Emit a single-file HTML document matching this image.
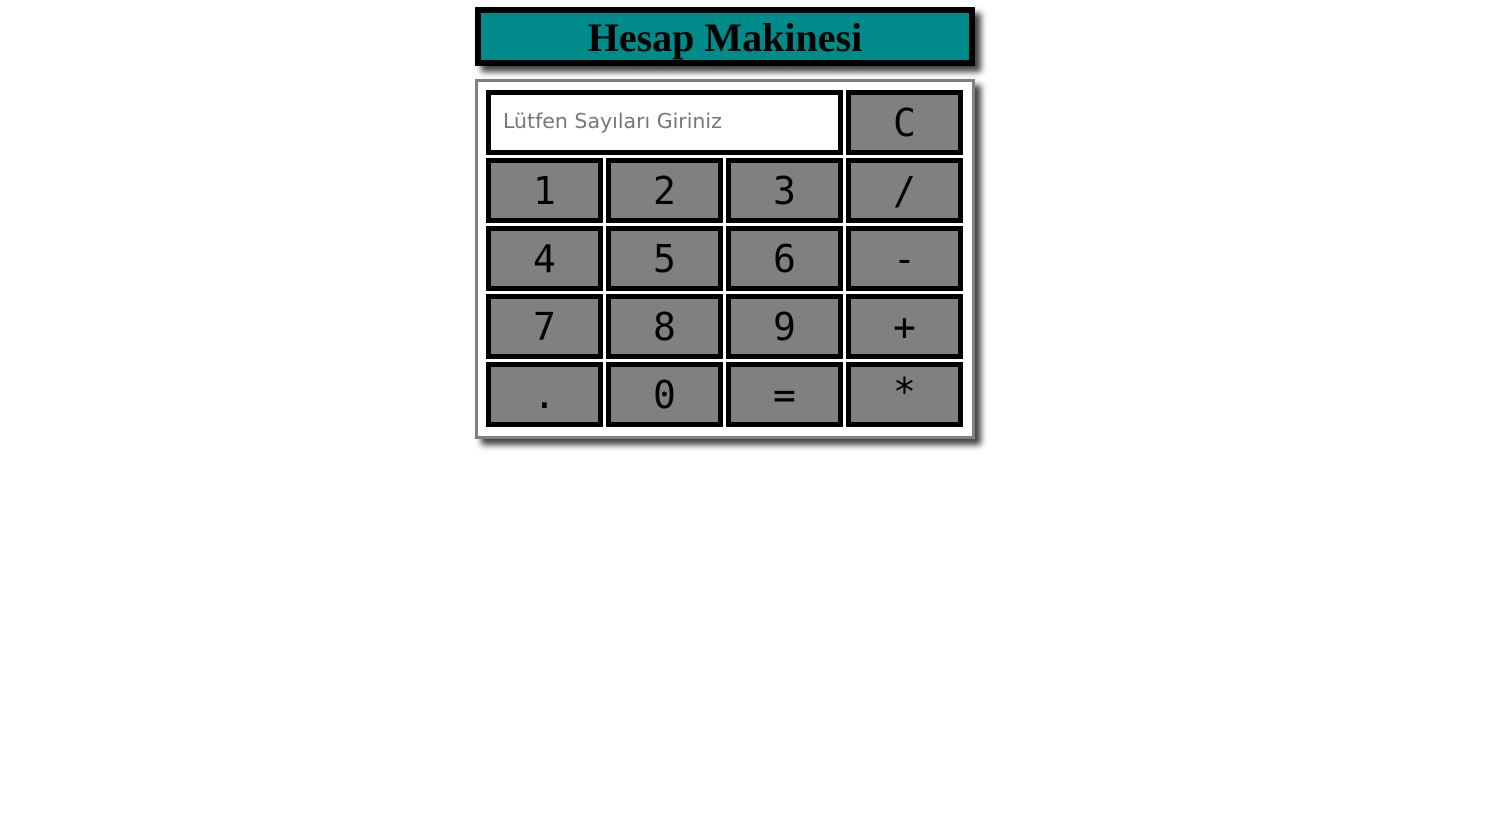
<!DOCTYPE html>
<html><head><meta charset="utf-8"><style>
body{margin:0;background:#fff;width:1496px;height:822px;position:relative;overflow:hidden}
.title{position:absolute;left:475px;top:7px;width:488px;height:47px;border:6px solid #000;background:#008b8b;box-shadow:6px 6px 6px #444;text-align:center;font:bold 40px/50px "Liberation Serif",serif;color:#000}
.panel{position:absolute;left:475px;top:79px;width:494px;height:354px;border:3px solid #808080;background:#fff;box-shadow:6px 6px 6px #444}
.b{position:absolute;width:107px;height:55px;border:5px solid #000;background:#808080;font:38px/56px "DejaVu Sans Mono",monospace;text-align:center;color:#000}
.in{position:absolute;left:486px;top:90px;height:55px;border:5px solid #000;background:#fff;font:20.5px/53px "DejaVu Sans",sans-serif;color:#777;padding-left:12px;width:335px}
</style></head><body>
<div class="title">Hesap Makinesi</div>
<div class="panel"></div>
<div class="in">Lütfen Sayıları Giriniz</div>
<div class="b" style="left:846px;top:90px">C</div>
<div class="b" style="left:486px;top:158px">1</div>
<div class="b" style="left:606px;top:158px">2</div>
<div class="b" style="left:726px;top:158px">3</div>
<div class="b" style="left:846px;top:158px">/</div>
<div class="b" style="left:486px;top:226px">4</div>
<div class="b" style="left:606px;top:226px">5</div>
<div class="b" style="left:726px;top:226px">6</div>
<div class="b" style="left:846px;top:226px">-</div>
<div class="b" style="left:486px;top:294px">7</div>
<div class="b" style="left:606px;top:294px">8</div>
<div class="b" style="left:726px;top:294px">9</div>
<div class="b" style="left:846px;top:294px">+</div>
<div class="b" style="left:486px;top:362px">.</div>
<div class="b" style="left:606px;top:362px">0</div>
<div class="b" style="left:726px;top:362px">=</div>
<div class="b" style="left:846px;top:362px;line-height:50px">*</div>
</body></html>
